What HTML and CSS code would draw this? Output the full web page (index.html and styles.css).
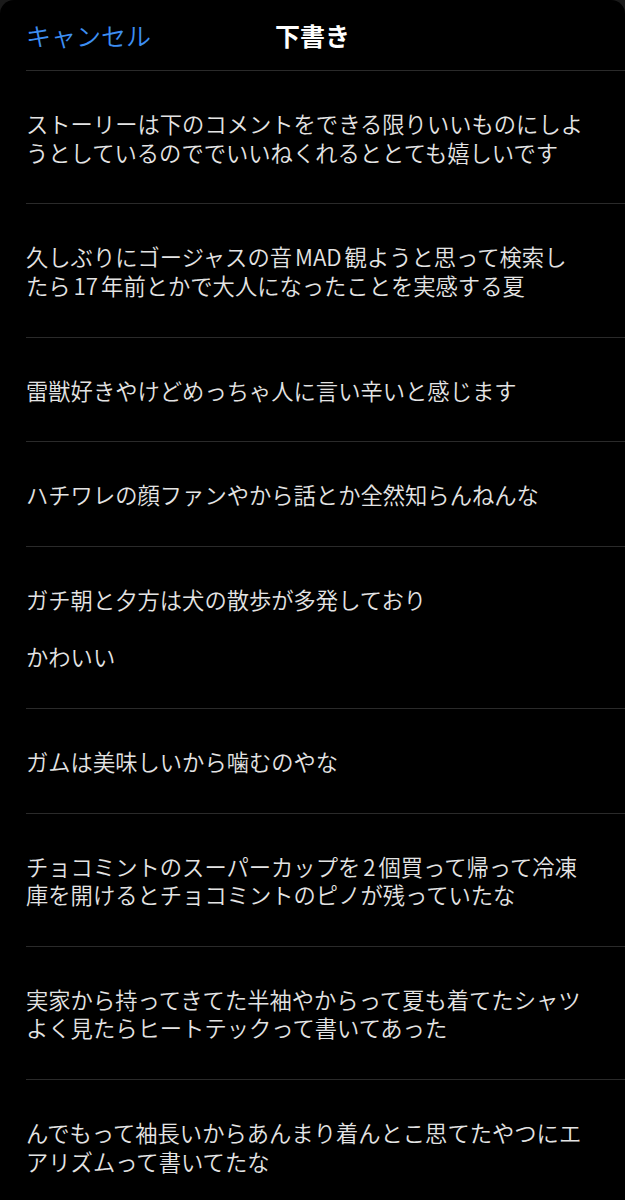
FILE: index.html
```html
<!doctype html>
<html lang="ja">

<head>
    <meta charset="utf-8">
    <title>下書き</title>
    <link rel="stylesheet" href="styles.css">
</head>

<body>
    <div class="sheet">
        <div class="topbar">
            <span class="cancel">キャンセル</span>
            <span class="title">下書き</span>
            <span></span>
        </div>

        <ul class="drafts">
            <li>ストーリーは下のコメントをできる限りいいものにしよ<br>うとしているのででいいねくれるととても嬉しいです</li>
            <li>久しぶりにゴージャスの音<span class="lat">MAD</span>観ようと思って検索し<br>たら<span class="lat">17</span>年前とかで大人になったことを実感する夏</li>
            <li>雷獣好きやけどめっちゃ人に言い辛いと感じます</li>
            <li>ハチワレの顔ファンやから話とか全然知らんねんな</li>
            <li>ガチ朝と夕方は犬の散歩が多発しており<br><br>かわいい</li>
            <li>ガムは美味しいから噛むのやな</li>
            <li>チョコミントのスーパーカップを<span class="lat">2</span>個買って帰って冷凍<br>庫を開けるとチョコミントのピノが残っていたな</li>
            <li>実家から持ってきてた半袖やからって夏も着てたシャツ<br>よく見たらヒートテックって書いてあった</li>
            <li>んでもって袖長いからあんまり着んとこ思てたやつにエ<br>アリズムって書いてたな</li>
        </ul>
    </div>
</body>

</html>
```

FILE: styles.css
```css
html,
body {
    margin: 0;
    padding: 0;
    background: #1a1a1a;
}

body {
    font-family: "Noto Sans CJK JP", "Noto Sans", sans-serif;
    color: #e4e4e4;
}

.sheet {
    background: #000;
    border-radius: 14px 14px 0 0;
    min-height: 1200px;
    overflow: hidden;
}

.topbar {
    display: grid;
    grid-template-columns: 1fr auto 1fr;
    align-items: center;
    height: 69px;
    padding: 0 0 1px 26px;
}

.cancel {
    color: #3d8ef2;
    font-size: 25px;
    font-weight: 350;
    justify-self: start;
}

.title {
    color: #fff;
    font-size: 25px;
    font-weight: bold;
    padding-right: 26px;
}

.drafts {
    list-style: none;
    margin: 0 0 0 26px;
    padding: 0;
}

.drafts li {
    border-top: 1px solid #2a2a2a;
    padding: 38px 20px 37.25px 0;
    font-size: 22.3px;
    font-weight: 350;
    line-height: 28.5px;
    white-space: nowrap;
}

.lat {
    padding: 0 3px;
}
```
